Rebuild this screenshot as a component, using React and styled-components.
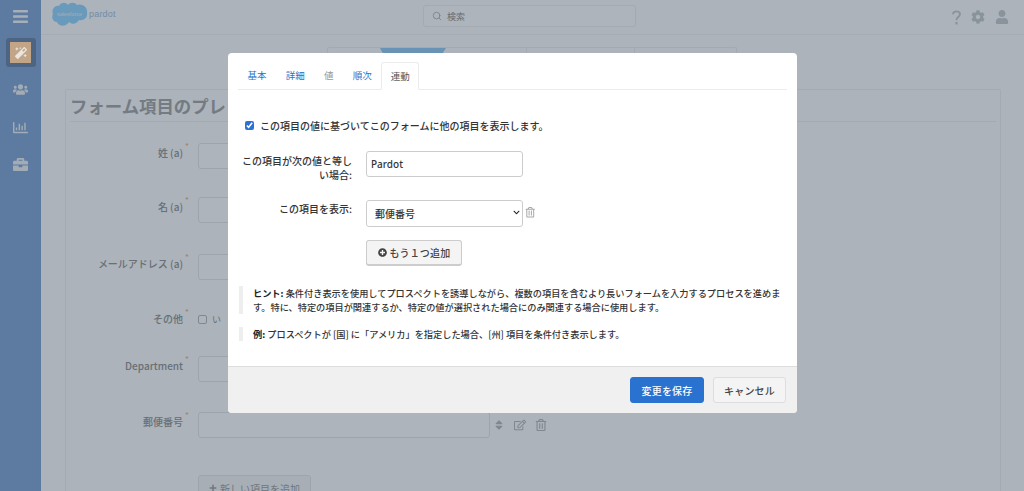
import React from "react";
import styled, { createGlobalStyle } from "styled-components";
import {
  FaBars, FaMagic, FaUsers, FaRegChartBar, FaBriefcase, FaCog, FaUser,
  FaPlusCircle, FaPlus, FaRegTrashAlt, FaRegEdit, FaSort, FaChevronDown,
} from "react-icons/fa";
import { Search } from "lucide-react";

const Global = createGlobalStyle`
  html, body { margin: 0; padding: 0; height: 100%; overflow: hidden; }
  body { font-family: "Noto Sans CJK JP", "Noto Sans", sans-serif; color: #333; background: #fff; }
  * { box-sizing: border-box; }
`;

const Page = styled.div`
  display: flex; width: 1024px; height: 491px; overflow: hidden; position: relative; background: #fdfdfd;
`;
const Sidebar = styled.nav`
  width: 41px; flex: none; background: #7ba0d2; display: flex; flex-direction: column; align-items: center;
`;
const Burger = styled.div`
  height: 32px; width: 100%; display: flex; align-items: center; justify-content: center; color: #f4f6f8; font-size: 17px; margin-bottom: 6px;
`;
const ActiveTool = styled.div`
  width: 30px; height: 29px; background: #5f7ca0; border-radius: 3px; display: flex; align-items: center; justify-content: center; margin-bottom: 4px;
`;
const ToolFace = styled.div`
  width: 21px; height: 21px; background: #c2a486; color: #e9e5df; font-size: 12px; display: flex; align-items: center; justify-content: center;
  position: relative; z-index: 2;
`;
const Tool = styled.div`
  height: 37.5px; display: flex; align-items: center; justify-content: center; color: #eef1f5; font-size: 15px;
`;
const Main = styled.div`
  flex: 1; min-width: 0; display: flex; flex-direction: column;
`;
const TopBar = styled.header`
  height: 35px; flex: none; border-bottom: 1px solid #f2f2f2; display: flex; align-items: center; padding: 0 15px 0 11px;
`;
const Logo = styled.div`
  display: flex; align-items: center; width: 371px; gap: 1px; margin-top: -5px;
`;
const CloudWrap = styled.div`
  position: relative; width: 36px; height: 25px;
  svg { display: block; }
  span { position: absolute; left: 5px; top: 8px; font: 5.5px/8px "Liberation Sans", sans-serif; color: #e8f2fa; }
`;
const Brand = styled.span`
  font: 9px/12px "Liberation Sans", sans-serif; color: #9cc0e0; letter-spacing: .2px; margin-top: -1px;
`;
const SearchBox = styled.div`
  width: 213px; height: 22px; border: 1px solid #eee; border-radius: 3px; display: flex; align-items: center; gap: 5px; padding-left: 8px;
  margin-top: -2px; font-size: 9px; color: #888; background: #fff;
  svg { color: #a8a8a8; }
`;
const TopIcons = styled.div`
  margin-left: auto; display: flex; align-items: center; gap: 10px; color: #c4c8cc;
`;
const Content = styled.div`
  flex: 1; padding: 12px 23px 0 24px; display: flex; flex-direction: column;
`;
const Steps = styled.div`
  align-self: center; margin-left: -2px; width: 410px; height: 8px; border: 1px solid #eee; border-bottom: 0; display: flex; flex: none; border-radius: 2px 2px 0 0;
`;
const Step = styled.div`
  width: ${(p) => p.$w}px; flex: none; height: 5px;
  ${(p) => (p.$active ? "background: #8cc8f4; clip-path: polygon(0 0, 100% 0, 95% 100%, 4% 100%);" : "")}
  ${(p) => (p.$edge ? "border-right: 1px solid #eee;" : "")}
`;
const Panel = styled.section`
  margin-top: 34px; border: 1px solid #eee; border-bottom: 0; flex: 1; padding: 4px 4px 0; border-radius: 2px 2px 0 0;
`;
const PanelTitle = styled.h1`
  margin: 0 0 21px; height: 28px; border-bottom: 1px solid #eee; font-size: 17.4px; font-weight: 700; line-height: 24px; color: #a0a0a0; white-space: nowrap;
`;
const Row = styled.div`
  display: flex; align-items: flex-start; height: ${(p) => p.$h}px;
`;
const RowLabel = styled.div`
  width: 113px; flex: none; text-align: right; font-size: 10px; line-height: 20px; font-weight: 500; color: #8c8c8c; white-space: nowrap;
  sup { position: absolute; font-size: 8px; line-height: 8px; margin-top: -1px; color: #e9b37f; margin-left: 2px; }
`;
const Fields = styled.div`
  margin-left: 15px; display: flex; align-items: center; gap: 3px; color: #999; min-height: ${(p) => (p.$check ? 20 : 26)}px;
`;
const GhostInput = styled.div`
  width: 292px; height: 26px; border: 1px solid #e5e5e5; border-radius: 3px; background: #fff; flex: none;
`;
const GhostCheck = styled.div`
  width: 9px; height: 9px; border: 1px solid #b5b5b5; border-radius: 2px; background: #fff; margin-right: 2px;
`;
const GhostText = styled.span`
  font-size: 9px; color: #8a8a8a;
`;
const GhostIcons = styled.div`
  display: flex; align-items: center; gap: 9px; font-size: 12px; color: #b5b5b5;
`;
const GhostButton = styled.div`
  width: 113px; height: 26px; border: 1px solid #e5e5e5; border-radius: 3px; display: flex; align-items: center; justify-content: center; gap: 3px; font-size: 10px; color: #999; background: #f6f6f6;
`;
const Backdrop = styled.div`
  position: absolute; inset: 0; background: rgba(50, 67, 85, .4); z-index: 1;
`;
const Modal = styled.div`
  position: absolute; z-index: 3; left: 228px; top: 53px; width: 569px; height: 360px; background: #fff; border-radius: 4px; display: flex; flex-direction: column; overflow: hidden;
`;
const ModalBody = styled.div`
  flex: 1; padding: 9px 10px 0; min-height: 0;
`;
const Tabs = styled.div`
  display: flex; border-bottom: 1px solid #ececec; height: 28px;
`;
const Tab = styled.div`
  height: ${(p) => (p.$active ? 28 : 27)}px; padding: 0 ${(p) => (p.$active ? 8.5 : 9.6)}px; font-size: 9.5px; line-height: 26px; color: ${(p) => (p.$active ? "#555" : p.$muted ? "#999" : "#2a72c9")};
  ${(p) => p.$active && "border: 1px solid #ececec; border-bottom-color: #fff; border-radius: 3px 3px 0 0; background: #fff;"}
`;
const ToggleRow = styled.label`
  display: flex; align-items: center; margin: 27px 0 0 7px; height: 16px; gap: 6px; font-size: 10px; font-weight: 500; color: #333; white-space: nowrap;
`;
const Check = styled.input`
  margin: 0; width: 9px; height: 9px; accent-color: #2a72d5;
`;
const FormRow = styled.div`
  display: flex; align-items: flex-start; margin-top: ${(p) => p.$mt}px;
`;
const FormLabel = styled.div`
  width: 114px; flex: none; text-align: right; font-size: 10px; line-height: 14px; font-weight: 500; color: #333; padding-top: 3px; margin-right: 14px;
`;
const TextInput = styled.input`
  width: 157px; height: 26px; border: 1px solid #ccc; border-radius: 3px; padding: 0 5px 0 4px; font: 500 10px "Noto Sans", sans-serif; color: #333; background: #fff; outline: none;
`;
const SelectWrap = styled.div`
  position: relative; width: 157px; height: 27px;
  svg { position: absolute; right: 3px; top: 10px; color: #222; pointer-events: none; }
`;
const SelectInput = styled.select`
  appearance: none; width: 100%; height: 100%; border: 1px solid #ccc; border-radius: 3px; padding-left: 8px; font: 500 10px "Noto Sans CJK JP", sans-serif; color: #333; background: #fff; outline: none;
`;
const TrashSlot = styled.span`
  margin-left: 2px; display: flex; height: 27px; align-items: center; font-size: 10.5px; color: #a6a6a6;
`;
const AddButton = styled.button`
  margin: 14px 0 0 128px; display: flex; align-items: center; justify-content: center; gap: 3px; width: 96px; height: 26px; border: 1px solid #ccc; border-bottom-width: 2px; border-radius: 3px; background: #f4f4f4; font: 500 10px "Noto Sans CJK JP", sans-serif; color: #444; letter-spacing: .02em; padding: 0;
`;
const Note = styled.p`
  margin: ${(p) => p.$mt}px 0 0 1px; border-left: 4px solid #eee; padding-left: 10px; font-size: 9.2px; line-height: 14px; font-weight: 500; color: #333; width: 547px;
  b { font-weight: 700; color: #222; }
`;
const Footer = styled.footer`
  height: 47px; flex: none; background: #f0f0f0; border-top: 1px solid #ddd; display: flex; justify-content: flex-end; align-items: center; gap: 9px; padding: 0 11px 0 0;
`;
const FooterButton = styled.button`
  width: ${(p) => p.$w}px; height: 26px; padding: 0; border-radius: 3px; font: 500 10px "Noto Sans CJK JP", sans-serif; letter-spacing: .02em;
  border: 1px solid ${(p) => (p.$primary ? "#2a72d0" : "#ddd")};
  background: ${(p) => (p.$primary ? "#2a72d0" : "#f4f4f4")};
  color: ${(p) => (p.$primary ? "#fff" : "#444")};
`;

const rows = [
  { label: "姓 (a)", h: 54 },
  { label: "名 (a)", h: 57 },
  { label: "メールアドレス (a)", h: 55 },
  { label: "その他", h: 47, check: true },
  { label: "Department", h: 56 },
  { label: "郵便番号", h: 63, tools: true },
];

const Cloud = () => (
  <CloudWrap>
    <svg width="36" height="25" viewBox="0 0 36 25" aria-hidden="true">
      <path fill="#8fd4ff" d="M7 4 C9 0 14 0 16 3 C18 0 23 0 25 3 C30 1 36 5 35 11 C36 16 31 19 27 18 C25 22 20 23 17 20 C14 25 7 25 5 20 C1 20 -1 15 1 12 C-1 8 3 3 7 4 Z" />
    </svg>
    <span>salesforce</span>
  </CloudWrap>
);

const HelpIcon = () => (
  <svg width="9" height="15" viewBox="0 0 9 15" aria-hidden="true">
    <path d="M1 4.2 C1 0.4 8 0.4 8 4.2 C8 6.8 4.5 6.6 4.5 10.2" fill="none" stroke="currentColor" strokeWidth="1.9" />
    <rect x="3.4" y="12" width="2.2" height="2.4" fill="currentColor" />
  </svg>
);

export default function App() {
  return (
    <>
      <Global />
      <Page>
        <Sidebar>
          <Burger><FaBars /></Burger>
          <ActiveTool><ToolFace><FaMagic /></ToolFace></ActiveTool>
          <Tool><FaUsers /></Tool>
          <Tool><FaRegChartBar /></Tool>
          <Tool><FaBriefcase /></Tool>
        </Sidebar>
        <Main>
          <TopBar>
            <Logo><Cloud /><Brand>pardot</Brand></Logo>
            <SearchBox><Search size={10} />検索</SearchBox>
            <TopIcons><HelpIcon /><FaCog size={14} /><FaUser size={14} /></TopIcons>
          </TopBar>
          <Content>
            <Steps>
              <Step $w={52} />
              <Step $w={66} $active />
              <Step $w={81} $edge />
              <Step $w={108} $edge />
            </Steps>
            <Panel>
              <PanelTitle>フォーム項目のプレビュー</PanelTitle>
              {rows.map((r) => (
                <Row key={r.label} $h={r.h}>
                  <RowLabel>{r.label}<sup>*</sup></RowLabel>
                  <Fields $check={r.check}>
                    {r.check ? (
                      <><GhostCheck /><GhostText>い</GhostText></>
                    ) : (
                      <GhostInput />
                    )}
                    {r.tools && (
                      <GhostIcons><FaSort /><FaRegEdit /><FaRegTrashAlt /></GhostIcons>
                    )}
                  </Fields>
                </Row>
              ))}
              <Row $h={26}>
                <RowLabel />
                <Fields>
                  <GhostButton><FaPlus size={8} />新しい項目を追加</GhostButton>
                </Fields>
              </Row>
            </Panel>
          </Content>
        </Main>
        <Backdrop />
        <Modal>
          <ModalBody>
            <Tabs>
              <Tab>基本</Tab>
              <Tab>詳細</Tab>
              <Tab $muted>値</Tab>
              <Tab>順次</Tab>
              <Tab $active>連動</Tab>
            </Tabs>
            <ToggleRow>
              <Check type="checkbox" defaultChecked />
              この項目の値に基づいてこのフォームに他の項目を表示します。
            </ToggleRow>
            <FormRow $mt={18}>
              <FormLabel>この項目が次の値と等しい場合:</FormLabel>
              <TextInput defaultValue="Pardot" />
            </FormRow>
            <FormRow $mt={17}>
              <FormLabel>この項目を表示:</FormLabel>
              <SelectWrap>
                <SelectInput defaultValue="郵便番号">
                  <option>郵便番号</option>
                </SelectInput>
                <FaChevronDown size={7} />
              </SelectWrap>
              <TrashSlot><FaRegTrashAlt /></TrashSlot>
            </FormRow>
            <AddButton><FaPlusCircle size={9} />もう１つ追加</AddButton>
            <Note $mt={20}>
              <b>ヒント:</b> 条件付き表示を使用してプロスペクトを誘導しながら、複数の項目を含むより長いフォームを入力するプロセスを進めます。特に、特定の項目が関連するか、特定の値が選択された場合にのみ関連する場合に使用します。
            </Note>
            <Note $mt={13}>
              <b>例:</b> プロスペクトが [国] に「アメリカ」を指定した場合、[州] 項目を条件付き表示します。
            </Note>
          </ModalBody>
          <Footer>
            <FooterButton $primary $w={74}>変更を保存</FooterButton>
            <FooterButton $w={73}>キャンセル</FooterButton>
          </Footer>
        </Modal>
      </Page>
    </>
  );
}
